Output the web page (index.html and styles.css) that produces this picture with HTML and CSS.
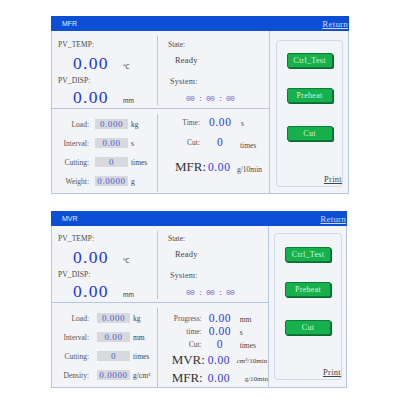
FILE: index.html
```html
<!DOCTYPE html>
<html>
<head>
<meta charset="utf-8">
<link rel="stylesheet" href="styles.css">
</head>
<body>
<div class="page">
  <div class="panel">
    <div class="hdr"><span class="hdr-title">MFR</span><span class="hdr-link">Return</span></div>
    <div class="body">
      <div class="main">
        <div class="top">
          <div class="cellL">
            <div class="lrow">PV_TEMP:</div>
            <div class="vrow"><span class="big">0.00</span><span class="unit">℃</span></div>
            <div class="lrow">PV_DISP:</div>
            <div class="vrow v2"><span class="big">0.00</span><span class="unit">mm</span></div>
          </div>
          <div class="cellM tm">
            <div class="s1">State:</div>
            <div class="s2">Ready</div>
            <div class="s3">System:</div>
            <div class="s4">00 : 00 : 00</div>
          </div>
        </div>
        <div class="bot">
          <div class="cellL fields">
            <div class="frow"><span class="flabel">Load:</span><span class="fbox">0.000</span><span class="funit">kg</span></div>
            <div class="frow"><span class="flabel">Interval:</span><span class="fbox">0.00</span><span class="funit">s</span></div>
            <div class="frow"><span class="flabel">Cutting:</span><span class="fbox">0</span><span class="funit">times</span></div>
            <div class="frow"><span class="flabel">Weight:</span><span class="fbox">0.0000</span><span class="funit">g</span></div>
          </div>
          <div class="cellM bm">
            <div class="mrow r1"><span class="mlabel">Time:</span><span class="mval">0.00</span><span class="munit">s</span></div>
            <div class="mrow r2"><span class="mlabel">Cut:</span><span class="mval c">0</span><span class="munit lo">times</span></div>
            <div class="mrow r3"><span class="mbig">MFR:</span><span class="mval">0.00</span><span class="munit lo2">g/10min</span></div>
          </div>
        </div>
      </div>
      <div class="side">
        <div class="card">
          <div class="btn">Ctrl_Test</div>
          <div class="btn">Preheat</div>
          <div class="btn">Cut</div>
          <div class="print">Print</div>
        </div>
      </div>
    </div>
  </div>

  <div class="panel p2">
    <div class="hdr"><span class="hdr-title">MVR</span><span class="hdr-link">Return</span></div>
    <div class="body">
      <div class="main">
        <div class="top">
          <div class="cellL">
            <div class="lrow">PV_TEMP:</div>
            <div class="vrow"><span class="big">0.00</span><span class="unit">℃</span></div>
            <div class="lrow">PV_DISP:</div>
            <div class="vrow v2"><span class="big">0.00</span><span class="unit">mm</span></div>
          </div>
          <div class="cellM tm">
            <div class="s1">State:</div>
            <div class="s2">Ready</div>
            <div class="s3">System:</div>
            <div class="s4">00 : 00 : 00</div>
          </div>
        </div>
        <div class="bot">
          <div class="cellL fields">
            <div class="frow"><span class="flabel">Load:</span><span class="fbox">0.000</span><span class="funit">kg</span></div>
            <div class="frow"><span class="flabel">Interval:</span><span class="fbox">0.00</span><span class="funit">mm</span></div>
            <div class="frow"><span class="flabel">Cutting:</span><span class="fbox">0</span><span class="funit">times</span></div>
            <div class="frow"><span class="flabel">Density:</span><span class="fbox">0.0000</span><span class="funit">g/cm³</span></div>
          </div>
          <div class="cellM bm2">
            <div class="nrow"><span class="nlabel">Progress:</span><span class="nval">0.00</span><span class="nunit">mm</span></div>
            <div class="nrow"><span class="nlabel">time:</span><span class="nval">0.00</span><span class="nunit">s</span></div>
            <div class="nrow"><span class="nlabel">Cut:</span><span class="nval c">0</span><span class="nunit">times</span></div>
            <div class="nrow big2"><span class="nbig">MVR:</span><span class="nval">0.00</span><span class="nunit u2">cm³/10min</span></div>
            <div class="nrow big2"><span class="nbig">MFR:</span><span class="nval">0.00</span><span class="nunit u3">g/10min</span></div>
          </div>
        </div>
      </div>
      <div class="side">
        <div class="card">
          <div class="btn">Ctrl_Test</div>
          <div class="btn">Preheat</div>
          <div class="btn">Cut</div>
          <div class="print">Print</div>
        </div>
      </div>
    </div>
  </div>
</div>
</body>
</html>
```

FILE: styles.css
```css
* { box-sizing: border-box; }
body {
  margin: 0;
  background: #ffffff;
  font-family: "Liberation Serif", "DejaVu Serif", serif;
  color: #4a4a4a;
  font-size: 7.5px;
}
.page { padding: 16px 0 0 51px; }
.panel { width: 298px; }
.p2 { width: 296px; margin-top: 17px; }

.hdr {
  height: 15px;
  background: #0c4fd5;
  display: flex;
  align-items: center;
  justify-content: space-between;
  padding: 0 1px 0 11px;
}
.hdr-title {
  font-family: "Liberation Sans", "DejaVu Sans", sans-serif;
  font-size: 7px;
  color: #e6ecfb;
}
.hdr-link {
  font-size: 9px;
  color: #cfd9ef;
  text-decoration: underline;
  letter-spacing: 0.2px;
}

.body {
  height: 163px;
  border: 1px solid #b5c7e4;
  border-top: none;
  background: #f2f4f7;
  display: flex;
}
.p2 .body { height: 162px; }

.main {
  width: 218px;
  border-right: 1px solid #b5c7e4;
  display: flex;
  flex-direction: column;
}
.p2 .main { width: 217px; }

.top {
  height: 78px;
  border-bottom: 1px solid #b5c7e4;
  display: flex;
}
.p2 .top { height: 77px; }
.bot { flex: 1; display: flex; }

.cellL { width: 105px; }
.cellM {
  flex: 1;
  margin: 5px 0 3px;
  border-left: 1px solid #b5c7e4;
}

/* top-left */
.top .cellL { padding-top: 9px; }
.p2 .top .cellL { padding-top: 8px; }
.lrow {
  height: 10px;
  line-height: 10px;
  padding-left: 6px;
  letter-spacing: 0.1px;
}
.vrow {
  height: 26px;
  display: flex;
  align-items: center;
  padding-left: 21px;
}
.vrow.v2 { height: 22px; }
.big {
  font-family: "Liberation Serif", "DejaVu Serif", serif;
  font-size: 17.5px;
  letter-spacing: 1.3px;
  color: #2038de;
  width: 36px;
}
.unit {
  margin-left: 14px;
  margin-top: 7px;
  font-family: "Liberation Sans", sans-serif;
  font-size: 6.5px;
  color: #333;
}

/* top-middle */
.tm { padding-top: 4px; }
.p2 .tm { padding-top: 3px; }
.s1 { height: 9px; line-height: 9px; padding-left: 10px; }
.s2 { height: 22px; line-height: 22px; padding-left: 17px; font-size: 8.5px; color: #444; letter-spacing: 0.2px; }
.s3 { height: 22px; line-height: 22px; padding-left: 12px; font-size: 8px; letter-spacing: 0.3px; }
.s4 {
  height: 12px;
  line-height: 12px;
  padding-left: 28px;
  font-family: "Liberation Mono", "DejaVu Sans Mono", monospace;
  font-size: 8px;
  letter-spacing: -0.8px;
  color: #6f6fd6;
}

/* bottom-left fields */
.fields { padding-top: 10px; }
.frow {
  display: flex;
  align-items: center;
  height: 10px;
  margin-bottom: 9px;
}
.flabel {
  width: 37px;
  text-align: right;
  color: #555;
}
.fbox {
  margin-left: 6px;
  width: 33px;
  height: 10px;
  line-height: 10px;
  background: #d7d9dc;
  color: #4b5bd2;
  text-align: center;
  font-family: "Liberation Serif", "DejaVu Serif", serif;
  font-size: 9px;
  letter-spacing: 0.6px;
}
.p2 .fbox { margin-left: 8px; }
.funit { margin-left: 3px; color: #444; }

/* bottom-middle panel 1 */
.bm { padding-top: 1px; }
.mrow { display: flex; align-items: center; }
.mrow.r1 { height: 14px; }
.mrow.r2 { height: 14px; margin-top: 6px; }
.mrow.r3 { height: 24px; margin-top: 6px; padding-left: 17px; }
.mlabel { width: 42px; text-align: right; color: #555; }
.mval {
  margin-left: 9px;
  width: 24px;
  font-family: "Liberation Serif", "DejaVu Serif", serif;
  font-size: 11.5px;
  letter-spacing: 0.6px;
  color: #2a3ad6;
}
.mval.c { padding-left: 8px; }
.munit { margin-left: 8px; margin-top: 3px; }
.munit.lo { margin-left: 7px; margin-top: 6px; }
.r3 .mval { margin-left: 2px; }
.munit.lo2 { margin-left: 5px; margin-top: 4px; font-size: 7.5px; }
.mbig {
  font-size: 13px;
  color: #333;
  width: 31px;
}

/* bottom-middle panel 2 */
.bm2 { padding-top: 4px; }
.nrow { display: flex; align-items: center; height: 12px; margin-bottom: 1px; }
.nrow.big2 { height: 17px; margin-bottom: 1px; padding-left: 14px; }
.nlabel { width: 44px; text-align: right; color: #555; }
.nval {
  margin-left: 7px;
  width: 24px;
  font-family: "Liberation Serif", "DejaVu Serif", serif;
  font-size: 11.5px;
  letter-spacing: 0.6px;
  color: #2a3ad6;
}
.nval.c { padding-left: 8px; }
.nunit { margin-left: 7px; margin-top: 2px; color: #444; }
.nbig { font-size: 13px; color: #333; width: 33px; }
.big2 .nval { margin-left: 3px; }
.nunit.u2 { margin-left: 5px; font-size: 7px; }
.nunit.u3 { margin-left: 13px; font-size: 7px; }

/* side */
.side {
  flex: 1;
  padding: 9px 5px 6px 6px;
}
.p2 .side { padding: 7px 4px 7px 5px; }
.card {
  height: 100%;
  border: 1px solid #cfd9e9;
  border-radius: 4px;
  display: flex;
  flex-direction: column;
  align-items: center;
  padding-top: 12px;
}
.p2 .card { padding-top: 13px; }
.btn {
  width: 46px;
  height: 15px;
  line-height: 13px;
  background: #16b14d;
  border: 1px solid #0c7d38;
  border-radius: 2px;
  box-shadow: 1px 1px 0 #0a6a2e;
  color: #d6f3de;
  text-align: center;
  font-size: 8px;
  letter-spacing: 0.3px;
  margin-bottom: 20px;
}
.btn + .btn + .btn { margin-top: 3px; }
.print {
  margin-top: auto;
  align-self: flex-end;
  margin-bottom: 2px;
  font-size: 8.5px;
  color: #444;
  text-decoration: underline;
  letter-spacing: 0.3px;
}
```
